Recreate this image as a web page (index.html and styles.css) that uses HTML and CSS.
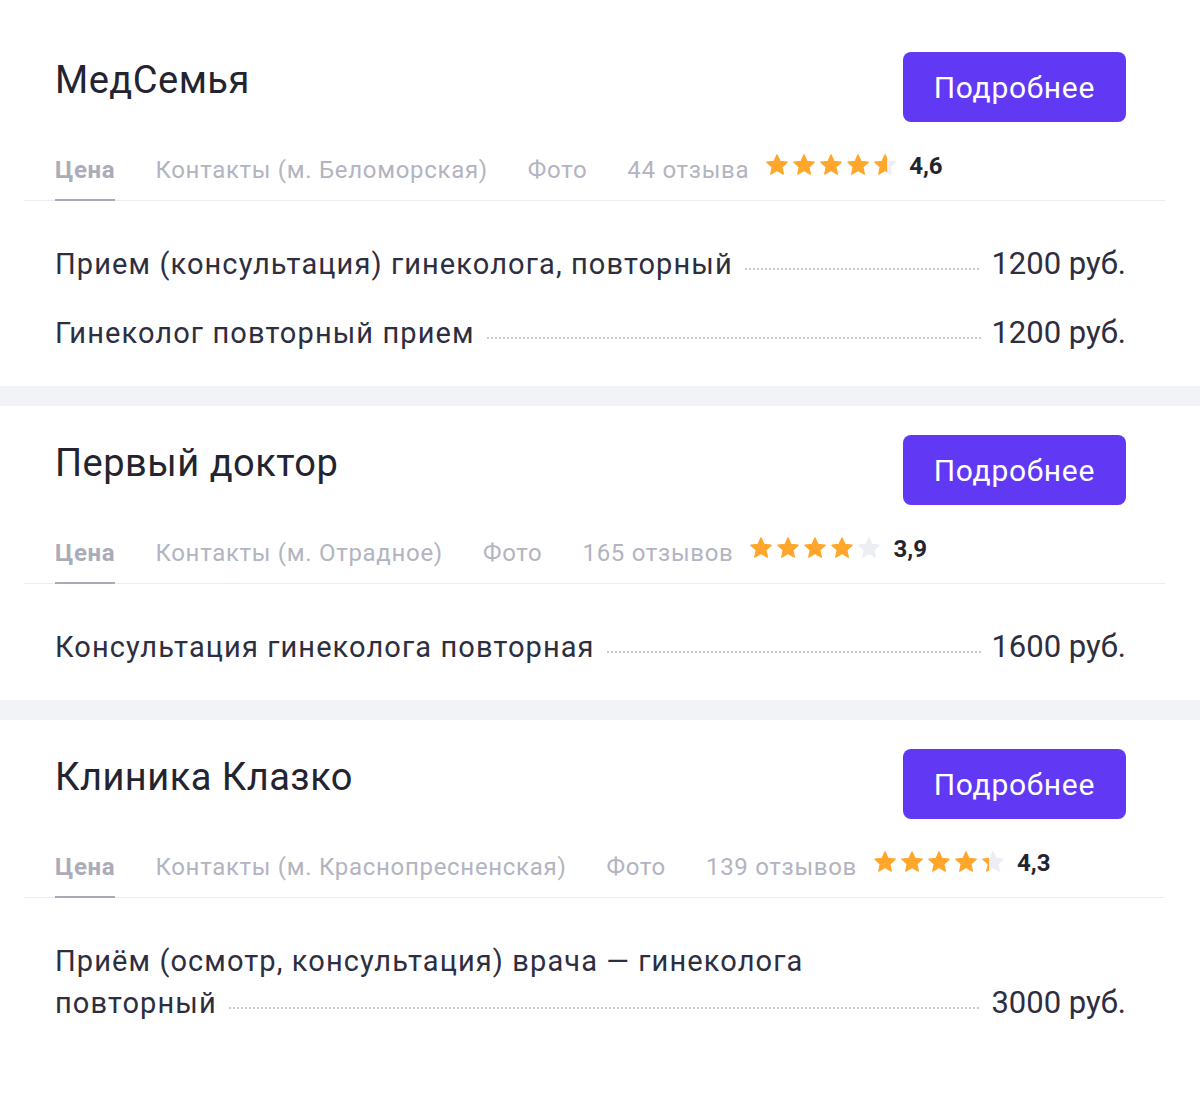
FILE: index.html
```html
<!DOCTYPE html>
<html lang="ru">
<head>
<meta charset="utf-8">
<title>Клиники</title>
<link rel="stylesheet" href="styles.css">
</head>
<body>
<main class="page">

  <section class="card">
    <div class="card-head">
      <h2 class="title">МедСемья</h2>
      <a class="btn" href="#">Подробнее</a>
    </div>
    <nav class="tabs">
      <span class="tab active">Цена</span>
      <span class="tab">Контакты (м. Беломорская)</span>
      <span class="tab">Фото</span>
      <span class="tab">44 отзыва</span>
      <div class="rating">
        <div class="stars">
          <svg class="star" viewBox="0 0 24 24"><path class="on" d="M12 1.8l3.1 6.6 7.1.8-5.3 4.9 1.5 7.1L12 17.6l-6.3 3.6 1.5-7.1L1.9 9.2l7.1-.8z"/></svg>
          <svg class="star" viewBox="0 0 24 24"><path class="on" d="M12 1.8l3.1 6.6 7.1.8-5.3 4.9 1.5 7.1L12 17.6l-6.3 3.6 1.5-7.1L1.9 9.2l7.1-.8z"/></svg>
          <svg class="star" viewBox="0 0 24 24"><path class="on" d="M12 1.8l3.1 6.6 7.1.8-5.3 4.9 1.5 7.1L12 17.6l-6.3 3.6 1.5-7.1L1.9 9.2l7.1-.8z"/></svg>
          <svg class="star" viewBox="0 0 24 24"><path class="on" d="M12 1.8l3.1 6.6 7.1.8-5.3 4.9 1.5 7.1L12 17.6l-6.3 3.6 1.5-7.1L1.9 9.2l7.1-.8z"/></svg>
          <svg class="star" viewBox="0 0 24 24"><defs><linearGradient id="g1"><stop offset="0.58" stop-color="#ffa62b"/><stop offset="0.58" stop-color="#eceef4"/></linearGradient></defs><path fill="url(#g1)" stroke="url(#g1)" d="M12 1.8l3.1 6.6 7.1.8-5.3 4.9 1.5 7.1L12 17.6l-6.3 3.6 1.5-7.1L1.9 9.2l7.1-.8z"/></svg>
        </div>
        <span class="score">4,6</span>
      </div>
    </nav>
    <div class="rows">
      <div class="row">
        <div class="name-wrap"><span class="name">Прием (консультация) гинеколога, повторный</span></div>
        <span class="price">1200 руб.</span>
      </div>
      <div class="row">
        <div class="name-wrap"><span class="name">Гинеколог повторный прием</span></div>
        <span class="price">1200 руб.</span>
      </div>
    </div>
  </section>

  <section class="card">
    <div class="card-head">
      <h2 class="title">Первый доктор</h2>
      <a class="btn" href="#">Подробнее</a>
    </div>
    <nav class="tabs">
      <span class="tab active">Цена</span>
      <span class="tab">Контакты (м. Отрадное)</span>
      <span class="tab">Фото</span>
      <span class="tab">165 отзывов</span>
      <div class="rating">
        <div class="stars">
          <svg class="star" viewBox="0 0 24 24"><path class="on" d="M12 1.8l3.1 6.6 7.1.8-5.3 4.9 1.5 7.1L12 17.6l-6.3 3.6 1.5-7.1L1.9 9.2l7.1-.8z"/></svg>
          <svg class="star" viewBox="0 0 24 24"><path class="on" d="M12 1.8l3.1 6.6 7.1.8-5.3 4.9 1.5 7.1L12 17.6l-6.3 3.6 1.5-7.1L1.9 9.2l7.1-.8z"/></svg>
          <svg class="star" viewBox="0 0 24 24"><path class="on" d="M12 1.8l3.1 6.6 7.1.8-5.3 4.9 1.5 7.1L12 17.6l-6.3 3.6 1.5-7.1L1.9 9.2l7.1-.8z"/></svg>
          <svg class="star" viewBox="0 0 24 24"><path class="on" d="M12 1.8l3.1 6.6 7.1.8-5.3 4.9 1.5 7.1L12 17.6l-6.3 3.6 1.5-7.1L1.9 9.2l7.1-.8z"/></svg>
          <svg class="star" viewBox="0 0 24 24"><path class="off" d="M12 1.8l3.1 6.6 7.1.8-5.3 4.9 1.5 7.1L12 17.6l-6.3 3.6 1.5-7.1L1.9 9.2l7.1-.8z"/></svg>
        </div>
        <span class="score">3,9</span>
      </div>
    </nav>
    <div class="rows">
      <div class="row">
        <div class="name-wrap"><span class="name">Консультация гинеколога повторная</span></div>
        <span class="price">1600 руб.</span>
      </div>
    </div>
  </section>

  <section class="card">
    <div class="card-head">
      <h2 class="title">Клиника Клазко</h2>
      <a class="btn" href="#">Подробнее</a>
    </div>
    <nav class="tabs">
      <span class="tab active">Цена</span>
      <span class="tab">Контакты (м. Краснопресненская)</span>
      <span class="tab">Фото</span>
      <span class="tab">139 отзывов</span>
      <div class="rating">
        <div class="stars">
          <svg class="star" viewBox="0 0 24 24"><path class="on" d="M12 1.8l3.1 6.6 7.1.8-5.3 4.9 1.5 7.1L12 17.6l-6.3 3.6 1.5-7.1L1.9 9.2l7.1-.8z"/></svg>
          <svg class="star" viewBox="0 0 24 24"><path class="on" d="M12 1.8l3.1 6.6 7.1.8-5.3 4.9 1.5 7.1L12 17.6l-6.3 3.6 1.5-7.1L1.9 9.2l7.1-.8z"/></svg>
          <svg class="star" viewBox="0 0 24 24"><path class="on" d="M12 1.8l3.1 6.6 7.1.8-5.3 4.9 1.5 7.1L12 17.6l-6.3 3.6 1.5-7.1L1.9 9.2l7.1-.8z"/></svg>
          <svg class="star" viewBox="0 0 24 24"><path class="on" d="M12 1.8l3.1 6.6 7.1.8-5.3 4.9 1.5 7.1L12 17.6l-6.3 3.6 1.5-7.1L1.9 9.2l7.1-.8z"/></svg>
          <svg class="star" viewBox="0 0 24 24"><defs><linearGradient id="g3"><stop offset="0.3" stop-color="#ffa62b"/><stop offset="0.3" stop-color="#eceef4"/></linearGradient></defs><path fill="url(#g3)" stroke="url(#g3)" d="M12 1.8l3.1 6.6 7.1.8-5.3 4.9 1.5 7.1L12 17.6l-6.3 3.6 1.5-7.1L1.9 9.2l7.1-.8z"/></svg>
        </div>
        <span class="score">4,3</span>
      </div>
    </nav>
    <div class="rows">
      <div class="row">
        <div class="name-wrap"><span class="name">Приём (осмотр, консультация) врача — гинеколога повторный</span></div>
        <span class="price">3000 руб.</span>
      </div>
    </div>
  </section>

</main>
</body>
</html>
```

FILE: styles.css
```css
* { box-sizing: border-box; }

html, body {
  margin: 0;
  padding: 0;
  background: #ffffff;
}

body {
  font-family: Roboto, "Noto Sans", "Liberation Sans", sans-serif;
  color: #2d2e40;
}

.page {
  padding-top: 23px;
}

.card {
  padding: 29px 0 32px;
  background: #fff;
}

.card + .card {
  border-top: 20px solid #f2f3f7;
}

.card-head {
  display: flex;
  justify-content: space-between;
  align-items: flex-start;
  padding: 0 74px 0 55px;
}

.title {
  margin: 6px 0 0;
  font-size: 38px;
  line-height: 44px;
  font-weight: 400;
  letter-spacing: 0.5px;
  color: #23242f;
}

.btn {
  display: flex;
  align-items: center;
  justify-content: center;
  height: 70px;
  padding: 0 31px;
  border-radius: 8px;
  background: #6139f4;
  color: #ffffff;
  font-size: 30px;
  letter-spacing: 0.7px;
  text-decoration: none;
}

.tabs {
  display: flex;
  align-items: flex-start;
  gap: 40px;
  margin: 33px 35px 0 24px;
  padding-left: 31px;
  border-bottom: 1px solid #ebebf1;
}

.tab {
  font-size: 24px;
  line-height: 30px;
  letter-spacing: 0.7px;
  color: #b3b4c1;
  padding-bottom: 14px;
  border-bottom: 2px solid transparent;
  margin-bottom: -1px;
}

.tab.active {
  font-weight: 700;
  color: #abacba;
  border-bottom-color: #a9aab8;
}

.rating {
  display: flex;
  align-items: center;
  height: 30px;
  margin-left: -24px;
  margin-top: -5px;
}

.stars {
  display: flex;
  gap: 3px;
}

.star {
  width: 24px;
  height: 24px;
  display: block;
}

.star path {
  stroke-width: 1.2;
  stroke-linejoin: round;
}

.star .on {
  fill: #ffa62b;
  stroke: #ffa62b;
}

.star .off {
  fill: #eceef4;
  stroke: #eceef4;
}

.score {
  margin-left: 12px;
  font-size: 24px;
  font-weight: 700;
  color: #23242f;
  position: relative;
  top: 1px;
}

.rows {
  display: flex;
  flex-direction: column;
  gap: 27px;
  padding: 42px 74px 0 55px;
}

.row {
  display: flex;
  align-items: last baseline;
}

.name-wrap {
  flex: 1 1 auto;
  min-width: 0;
  overflow: hidden;
  padding-right: 151px;
  font-size: 29px;
  line-height: 42px;
  letter-spacing: 1.1px;
  color: #2d2e40;
}

.name::after {
  content: "";
  display: inline-block;
  width: 2000px;
  height: 2px;
  margin-left: 12px;
  margin-right: -2000px;
  vertical-align: 4px;
  background-image: repeating-linear-gradient(90deg, #c8c9d2 0 2px, transparent 2px 4px);
}

.price {
  flex: 0 0 auto;
  margin-left: 10px;
  font-size: 31px;
  line-height: 42px;
  color: #2d2e40;
}
```
